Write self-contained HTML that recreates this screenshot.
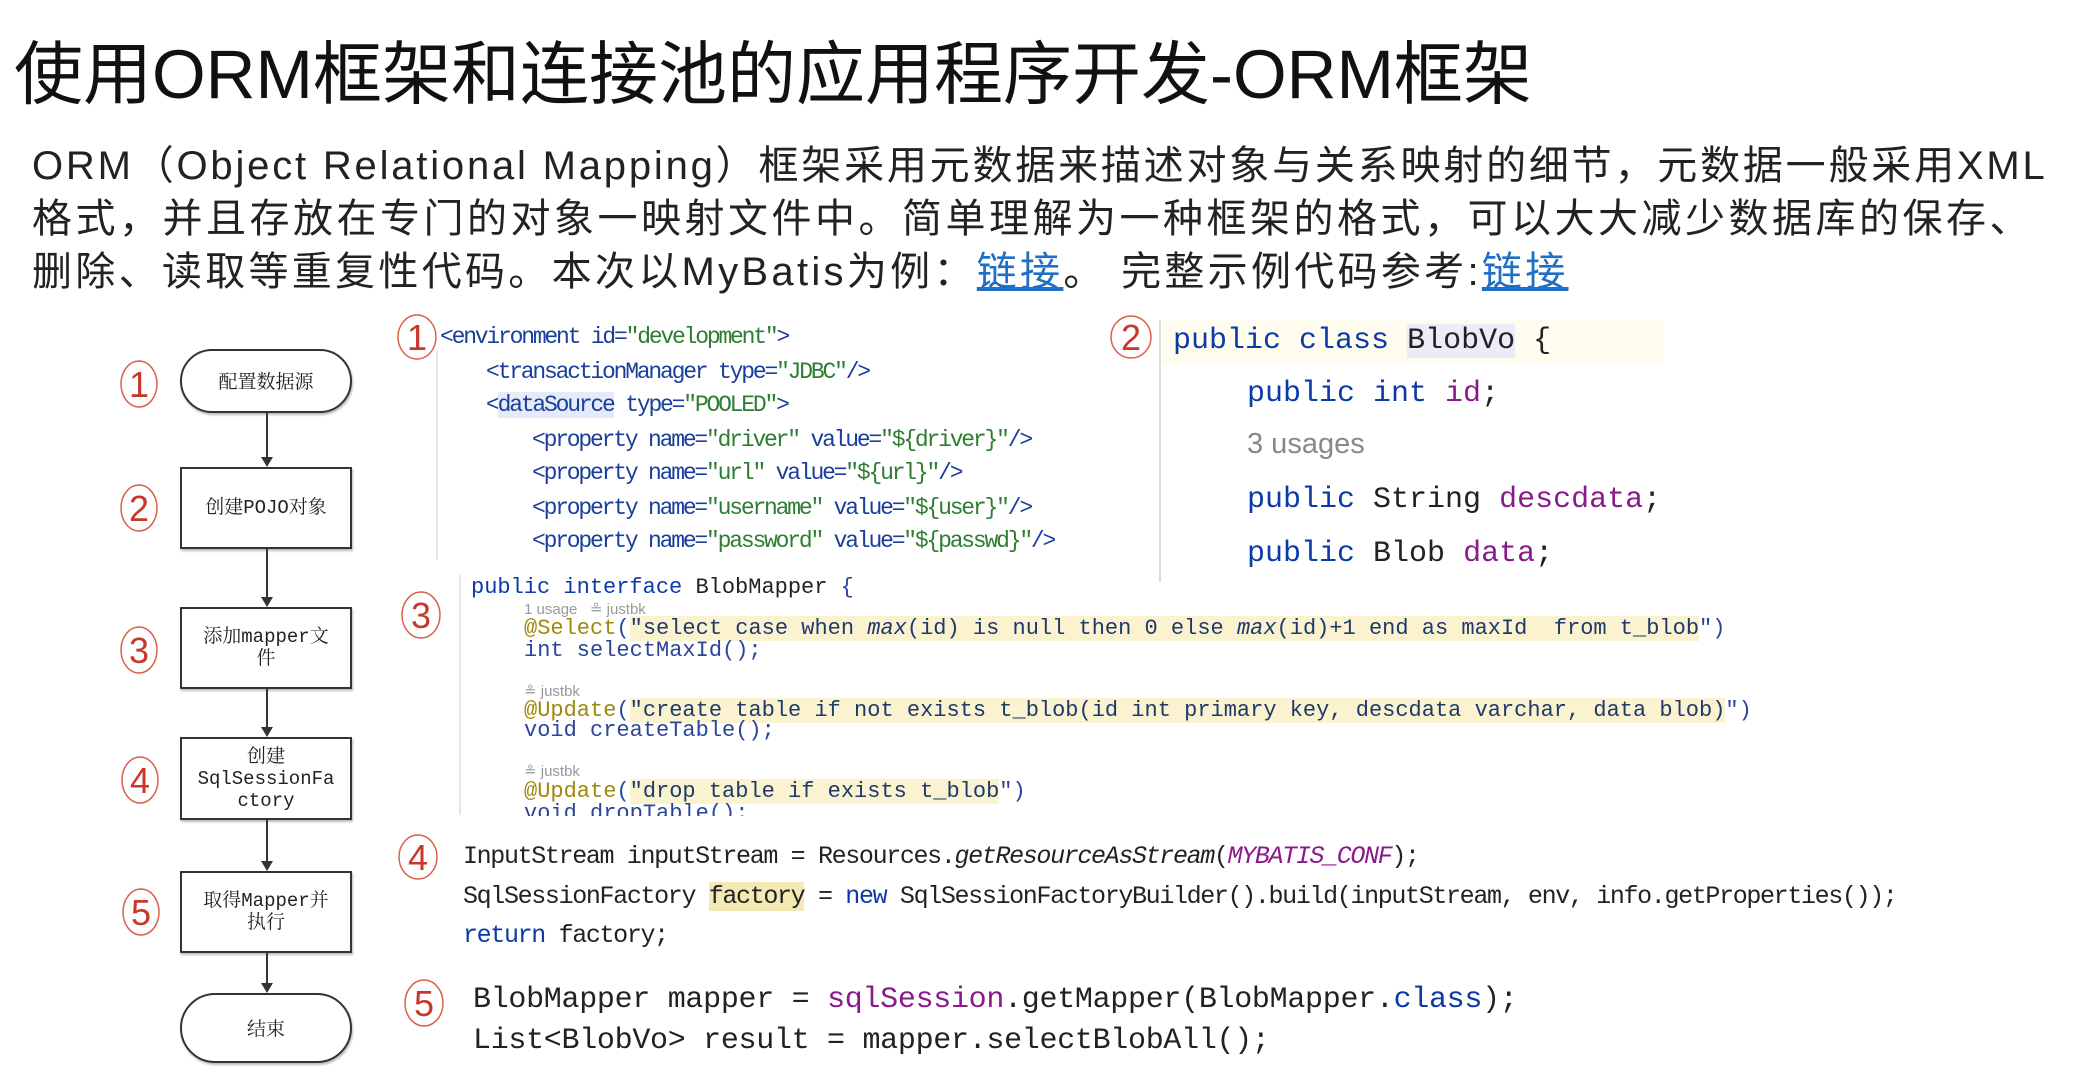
<!DOCTYPE html>
<html><head><meta charset="utf-8"><style>
body{margin:0;width:2080px;height:1077px;background:#fff;position:relative;overflow:hidden;font-family:"Liberation Sans","Noto Sans CJK SC",sans-serif;}
.a{position:absolute;white-space:pre;}
.t{left:14px;top:30px;font-size:69px;color:#111;line-height:90px;}
.p{left:32px;font-size:40px;color:#222;line-height:53px;}
.lk{color:#1f6fc2;text-decoration:underline;}
.m{font-family:"Liberation Mono",monospace;}
.x1{font-size:23px;letter-spacing:-2.2px;line-height:34px;color:#1a3f9a;}
.g{color:#2e7d32}
.kw{color:#0b3aa8}
.pu{color:#8a1a8c}
.dk{color:#222}
.x2{font-size:30px;line-height:53px;color:#222;}
.x3{font-size:22px;line-height:20px;color:#2a4599;}
.gr{color:#999;font-family:"Liberation Sans",sans-serif;font-size:15px;letter-spacing:0}
.an{color:#9e880d}
.hl{background:#fbf3d0}
.st{color:#1d3a6b}
.x4{font-size:25px;letter-spacing:-1.35px;line-height:40px;color:#222;}
.x5{font-size:30px;letter-spacing:-0.3px;line-height:41px;color:#222;}
.box{position:absolute;left:180px;width:172px;border:2px solid #333;box-sizing:border-box;display:flex;align-items:center;justify-content:center;text-align:center;font-family:"Liberation Mono","Noto Serif CJK SC",serif;font-size:19px;line-height:22px;color:#222;box-shadow:1px 2px 2px #bbb;background:#fff;}
.vl{position:absolute;left:266px;width:2px;background:#333;}
.ah{position:absolute;left:261px;width:0;height:0;border-left:6px solid transparent;border-right:6px solid transparent;border-top:10px solid #333;}
</style></head><body>
<div class="a t">使用ORM框架和连接池的应用程序开发-ORM框架</div>
<div class="a p" style="top:140px;letter-spacing:2.8px">ORM（Object Relational Mapping）框架采用元数据来描述对象与关系映射的细节，元数据一般采用XML</div>
<div class="a p" style="top:193px;letter-spacing:3.5px">格式，并且存放在专门的对象一映射文件中。简单理解为一种框架的格式，可以大大减少数据库的保存、</div>
<div class="a p" style="top:246px;letter-spacing:3.3px">删除、读取等重复性代码。本次以MyBatis为例：<span class="lk">链接</span>。 完整示例代码参考:<span class="lk">链接</span></div>

<!-- flowchart -->
<div class="box" style="top:349px;height:64px;border-radius:32px;font-family:'Noto Serif CJK SC',serif">配置数据源</div>
<div class="vl" style="top:413px;height:46px"></div><div class="ah" style="top:457px"></div>
<div class="box" style="top:467px;height:82px">创建POJO对象</div>
<div class="vl" style="top:549px;height:50px"></div><div class="ah" style="top:597px"></div>
<div class="box" style="top:607px;height:82px">添加mapper文<br>件</div>
<div class="vl" style="top:689px;height:40px"></div><div class="ah" style="top:727px"></div>
<div class="box" style="top:737px;height:83px">创建<br>SqlSessionFa<br>ctory</div>
<div class="vl" style="top:820px;height:43px"></div><div class="ah" style="top:861px"></div>
<div class="box" style="top:871px;height:82px">取得Mapper并<br>执行</div>
<div class="vl" style="top:953px;height:32px"></div><div class="ah" style="top:983px"></div>
<div class="box" style="top:993px;height:70px;border-radius:35px;font-family:'Noto Serif CJK SC',serif">结束</div>

<svg class="a" style="left:0;top:0" width="2080" height="1077">
<g fill="none" stroke="#d9604c" stroke-width="1.5">
<ellipse cx="139" cy="384" rx="18" ry="23"/><ellipse cx="139" cy="508" rx="18" ry="23"/><ellipse cx="139" cy="650" rx="18" ry="23"/><ellipse cx="140" cy="780" rx="18" ry="23"/><ellipse cx="141" cy="912" rx="18" ry="23"/>
<ellipse cx="417" cy="337" rx="19" ry="22"/><ellipse cx="1131" cy="337" rx="20" ry="21"/><ellipse cx="421" cy="615" rx="19" ry="23"/><ellipse cx="418" cy="857" rx="19" ry="22"/><ellipse cx="424" cy="1003" rx="19" ry="23"/>
</g>
<g fill="#c8382a" font-family="Liberation Sans,sans-serif" font-size="36" text-anchor="middle">
<text x="139" y="397">1</text><text x="139" y="521">2</text><text x="139" y="663">3</text><text x="140" y="793">4</text><text x="141" y="925">5</text>
<text x="417" y="350">1</text><text x="1131" y="350">2</text><text x="421" y="628">3</text><text x="418" y="870">4</text><text x="424" y="1016">5</text>
</g>
<line x1="437" y1="350" x2="437" y2="560" stroke="#e6e6e6" stroke-width="2"/>
<line x1="1160" y1="320" x2="1160" y2="582" stroke="#ddd" stroke-width="2"/>
<line x1="460" y1="575" x2="460" y2="815" stroke="#e6e6e6" stroke-width="2"/>
</svg>

<!-- block 1 -->
<div class="a m x1" style="left:440px;top:320px">&lt;environment id=<span class="g">"development"</span>&gt;</div>
<div class="a m x1" style="left:486px;top:355px">&lt;transactionManager type=<span class="g">"JDBC"</span>/&gt;</div>
<div class="a m x1" style="left:486px;top:388px">&lt;<span style="background:#e6ebfa">dataSource</span> type=<span class="g">"POOLED"</span>&gt;</div>
<div class="a m x1" style="left:532px;top:423px">&lt;property name=<span class="g">"driver"</span> value=<span class="g">"${driver}"</span>/&gt;</div>
<div class="a m x1" style="left:532px;top:456px">&lt;property name=<span class="g">"url"</span> value=<span class="g">"${url}"</span>/&gt;</div>
<div class="a m x1" style="left:532px;top:491px">&lt;property name=<span class="g">"username"</span> value=<span class="g">"${user}"</span>/&gt;</div>
<div class="a m x1" style="left:532px;top:524px">&lt;property name=<span class="g">"password"</span> value=<span class="g">"${passwd}"</span>/&gt;</div>

<!-- block 2 -->
<div class="a" style="left:1163px;top:320px;width:501px;height:44px;background:#fdfcee"></div>
<div class="a m x2" style="left:1173px;top:315px"><span class="kw">public class</span> <span style="background:#ececf8">BlobVo</span> {</div>
<div class="a m x2" style="left:1247px;top:368px"><span class="kw">public int</span> <span class="pu">id</span>;</div>
<div class="a" style="left:1247px;top:428px;font-size:29px;color:#888;">3 usages</div>
<div class="a m x2" style="left:1247px;top:474px"><span class="kw">public</span> String <span class="pu">descdata</span>;</div>
<div class="a m x2" style="left:1247px;top:528px"><span class="kw">public</span> Blob <span class="pu">data</span>;</div>

<!-- block 3 -->
<div class="a m x3" style="left:471px;top:578px"><span class="kw">public interface</span> <span class="dk">BlobMapper</span> {</div>
<div class="a m x3" style="left:524px;top:599px"><span class="gr">1 usage &nbsp;&nbsp;≗ justbk</span></div>
<div class="a m x3" style="left:524px;top:619px"><span class="an">@Select</span>(<span class="hl st">"select case when <i>max</i>(id) is null then 0 else <i>max</i>(id)+1 end as maxId  from t_blob</span>")</div>
<div class="a m x3" style="left:524px;top:641px">int selectMaxId();</div>
<div class="a m x3" style="left:524px;top:681px"><span class="gr">≗ justbk</span></div>
<div class="a m x3" style="left:524px;top:701px"><span class="an">@Update</span>(<span class="hl st">"create table if not exists t_blob(id int primary key, descdata varchar, data blob)</span>")</div>
<div class="a m x3" style="left:524px;top:721px">void createTable();</div>
<div class="a m x3" style="left:524px;top:761px"><span class="gr">≗ justbk</span></div>
<div class="a m x3" style="left:524px;top:782px"><span class="an">@Update</span>(<span class="hl st">"drop table if exists t_blob</span>")</div>
<div class="a" style="left:500px;top:802px;width:300px;height:14px;overflow:hidden"><div class="m x3" style="position:absolute;left:24px;top:2px;white-space:pre">void dropTable();</div></div>

<!-- block 4 -->
<div class="a m x4" style="left:463px;top:837px">InputStream inputStream = Resources.<i>getResourceAsStream</i>(<i class="pu">MYBATIS_CONF</i>);</div>
<div class="a m x4" style="left:463px;top:877px">SqlSessionFactory <span class="hl" style="background:#f4e9b4">factory</span> = <span class="kw">new</span> SqlSessionFactoryBuilder().build(inputStream, env, info.getProperties());</div>
<div class="a m x4" style="left:463px;top:916px"><span class="kw">return</span> factory;</div>

<!-- block 5 -->
<div class="a m x5" style="left:473px;top:980px">BlobMapper mapper = <span class="pu">sqlSession</span>.getMapper(BlobMapper.<span class="kw">class</span>);</div>
<div class="a m x5" style="left:473px;top:1021px">List&lt;BlobVo&gt; result = mapper.selectBlobAll();</div>
</body></html>
